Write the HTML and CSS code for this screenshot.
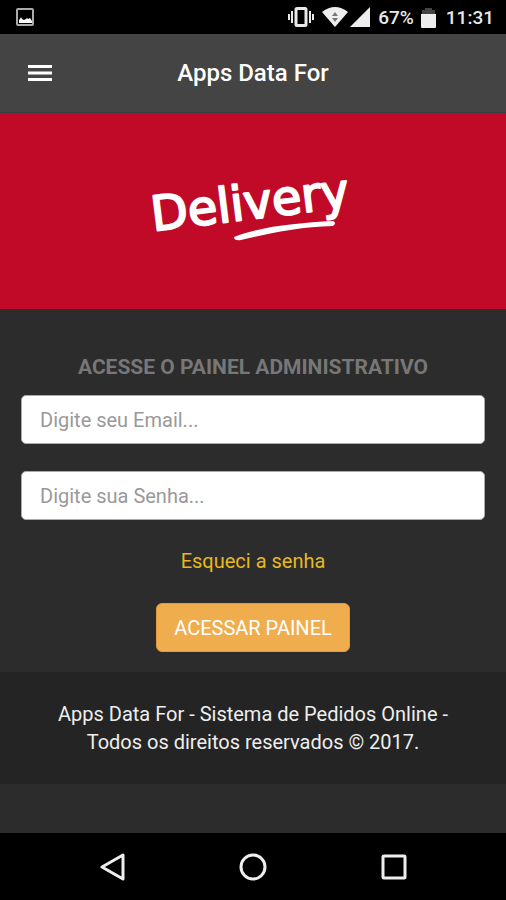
FILE: index.html
```html
<!DOCTYPE html>
<html lang="pt-BR">
<head>
<meta charset="utf-8">
<meta name="viewport" content="width=device-width, initial-scale=1">
<title>Apps Data For</title>
<link rel="stylesheet" href="styles.css">
</head>
<body>
<div class="status">
  <svg class="status-photo" width="18" height="18" viewBox="0 0 18 18"><rect x="1" y="1" width="16" height="16" rx="1" fill="none" stroke="#aaa" stroke-width="2"/><path d="M3 15V12l1-1 1-2 1 2 2 1 2-1 1-1 1 1 2-1 2 3v2z" fill="#fff"/></svg>
  <div class="status-right">
    <svg width="26" height="20" viewBox="0 0 26 20" fill="none" stroke="#e8e8e8"><rect x="8" y="1.500" width="10" height="17" rx="1" stroke-width="3"/><path d="M4 4v12M22 4v12M1 7v6M25 7v6" stroke-width="2"/></svg>
    <svg class="wifi" width="26" height="20" viewBox="0 0 26 20"><path d="M0 5Q13-5 26 5L13 20z" fill="#eee"/><path d="M10 9l3-4 3 4zM10 11h6l-3 4z" fill="#777"/></svg>
    <svg class="signal" width="20" height="20" viewBox="0 0 20 20"><path d="M20 0v20H0z" fill="#eee"/></svg>
    <span class="percent">67%</span>
    <svg class="battery" width="15" height="21" viewBox="0 0 15 21"><path d="M1 7V3h3V1h7v2h3v4z" fill="#444"/><path d="M0 7h15v13q0 1-1 1H1q-1 0-1-1z" fill="#eee"/></svg>
    <span>11:31</span>
  </div>
</div>
<header class="bar">
  <button class="menu" type="button" aria-label="Menu"><svg width="24" height="18" viewBox="0 0 24 18"><path d="M0 2.500h24M0 9h24M0 15.500h24" stroke="#fff" stroke-width="3"/></svg></button>
  <h1>Apps Data For</h1>
</header>
<div class="banner">
  <svg width="260" height="130" viewBox="-10 -20 260 130" role="img" aria-label="Delivery">
    <text class="logo-text" x="20" y="65" transform="rotate(-7 20 65)">Delivery</text>
    <path d="M101 71C129 60 165 57 200 55q4 2 0 5C166 61 137 67 108 74q-7 1-7-3z" fill="#fff"/>
  </svg>
</div>
<main>
  <form>
    <h2>ACESSE O PAINEL ADMINISTRATIVO</h2>
    <input type="email" placeholder="Digite seu Email..." aria-label="Email">
    <input type="password" placeholder="Digite sua Senha..." aria-label="Senha">
    <a href="#">Esqueci a senha</a>
    <button class="submit" type="button">ACESSAR PAINEL</button>
  </form>
</main>
<footer>Apps Data For - Sistema de Pedidos Online - Todos os direitos reservados © 2017.</footer>
<nav class="system">
  <button type="button" aria-label="Voltar"><svg width="28" height="28" viewBox="0 0 28 28"><path d="M25 2v24L4 14z"/></svg></button>
  <button type="button" aria-label="Início"><svg width="28" height="28" viewBox="0 0 28 28"><circle cx="14" cy="14" r="12"/></svg></button>
  <button type="button" aria-label="Recentes"><svg width="28" height="28" viewBox="0 0 28 28"><rect x="3" y="3" width="22" height="22" rx="1"/></svg></button>
</nav>
</body>
</html>
```
FILE: styles.css
```css
* { box-sizing: border-box; }
body {
  margin: 0;
  min-height: 100vh;
  display: flex;
  flex-direction: column;
  background: #2c2c2c;
  color: #fff;
  font-family: Roboto, "Liberation Sans", sans-serif;
  font-size: 20px;
}
button { border: 0; padding: 0; background: none; font: inherit; color: inherit; }
svg { display: block; }
.status {
  height: 34px;
  padding: 0 12px 0 16px;
  display: flex;
  align-items: center;
  justify-content: space-between;
  background: #000;
  color: #e8e8e8;
  font-size: 19px;
  font-weight: 500;
}
.status-right { display: flex; align-items: center; }
.wifi { margin-left: 8px; }
.signal { margin-left: 2px; }
.percent { margin-left: 8px; }
.battery { margin: 0 10px 0 7px; }
.bar {
  min-height: 79px;
  padding: 0 28px;
  display: grid;
  grid-template-columns: 24px 1fr 24px;
  align-items: center;
  background: #444;
  border-bottom: 1px solid #354040;
}
h1 { margin: 0; text-align: center; font-size: 24px; font-weight: 500; line-height: 32px; }
.banner {
  min-height: 196px;
  display: flex;
  align-items: center;
  justify-content: center;
  background: #c00a27;
}
.logo-text {
  font-family: "DejaVu Sans", sans-serif;
  font-size: 48px;
  fill: #fff;
  stroke: #fff;
  stroke-width: 2px;
  stroke-linejoin: round;
}
form {
  padding: 44px 21px 20px;
  display: flex;
  flex-direction: column;
  align-items: center;
}
h2 { margin: 0 0 14px; font-size: 21px; font-weight: 700; line-height: 28px; color: #777; }
input {
  width: 100%;
  height: 49px;
  margin-bottom: 27px;
  padding: 0 18px;
  border: 1px solid #aaa;
  border-radius: 5px;
  background: #fff;
  color: #333;
  font: inherit;
}
input::placeholder { color: #999; opacity: 1; }
a { margin: 0 0 28px; color: #e6b91e; line-height: 28px; text-decoration: none; }
.submit {
  height: 49px;
  padding: 0 17px;
  border: 1px solid #e39b3d;
  border-radius: 6px;
  background: #f0ad4e;
  color: #fff;
}
footer {
  padding: 28px 52px;
  background: #242424;
  color: #eee;
  line-height: 28px;
  text-align: center;
}
.system {
  height: 67px;
  margin-top: auto;
  padding: 0 42px;
  display: grid;
  grid-template-columns: repeat(3, 1fr);
  align-items: center;
  background: #000;
}
.system button { justify-self: center; }
.system svg { fill: none; stroke: #eee; stroke-width: 3; stroke-linejoin: round; }
```
